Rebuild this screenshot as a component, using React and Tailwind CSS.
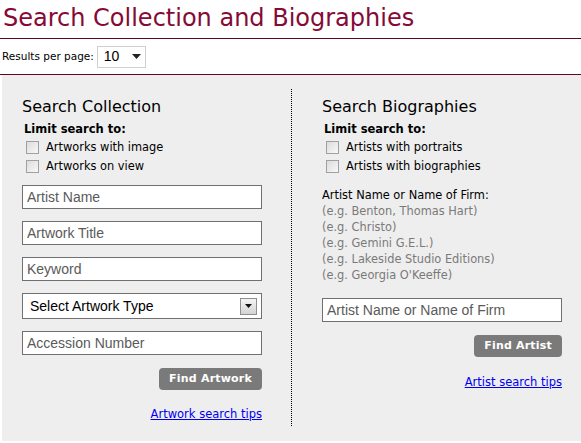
import { useState } from "react";

const FONT = { fontFamily: '"DejaVu Sans", Verdana, sans-serif' };
const ARIAL = { fontFamily: '"Liberation Sans", Arial, sans-serif' };

function Check({ label }) {
  const [on, setOn] = useState(false);
  return (
    <label className="flex items-center h-[19px] cursor-pointer" onClick={() => setOn(!on)}>
      <span className="ml-1 w-[13px] h-[13px] border border-[#a0a0a0] bg-gradient-to-br from-[#dcdcdc] to-[#f8f8f8] flex items-center justify-center text-[10px] leading-none">
        {on ? "✓" : ""}
      </span>
      <span className="ml-[7px] text-[11.4px] text-black">{label}</span>
    </label>
  );
}

function Field({ placeholder }) {
  return (
    <input
      type="text"
      placeholder={placeholder}
      style={ARIAL}
      className="block w-[240px] h-[24px] border border-[#707070] bg-white px-1 text-[14px] text-black placeholder:text-[#5a5a5a] outline-none"
    />
  );
}

function GrayButton({ children }) {
  return (
    <button className="h-[22px] px-[10px] rounded-[4px] bg-[#7a7a7a] text-white text-[11px] font-bold tracking-[0.2px]">
      {children}
    </button>
  );
}

export default function App() {
  return (
    <div className="w-[581px] h-[443px] bg-white overflow-hidden" style={FONT}>
      <h1 className="pl-[3px] pt-[2px] h-[39px] text-[24px] leading-[32px] text-[#850a35] border-b border-[#5a0822]">
        Search Collection and Biographies
      </h1>

      <div className="h-[36px] flex items-center pl-[2px] border-b border-[#5a0822]">
        <span className="text-[10.5px] text-black">Results per page:</span>
        <div className="ml-[3px] w-[49px] h-[22px] border border-[#d0d0d0] bg-white flex items-center justify-between pl-[6px] pr-[4px]" style={ARIAL}>
          <span className="text-[14px] text-black">10</span>
          <svg width="9" height="5" viewBox="0 0 9 5"><path d="M0 0h9L4.5 5z" fill="#222" /></svg>
        </div>
      </div>

      <div className="ml-[2px] h-[366px] bg-[#eeeeee] flex">
        {/* left column */}
        <div className="w-[290px] pt-[14px] pb-[15px]">
          <div className="h-full border-r border-dotted border-black pl-[20px] pt-[8px]">
            <h2 className="text-[16px] leading-[20px] text-black">Search Collection</h2>
            <div className="mt-[5px] ml-[2px] text-[11.5px] font-bold leading-[15px]">Limit search to:</div>
            <div className="mt-[1px]">
              <Check label="Artworks with image" />
              <Check label="Artworks on view" />
            </div>
            <div className="mt-[9px] flex flex-col gap-[12px]">
              <Field placeholder="Artist Name" />
              <Field placeholder="Artwork Title" />
              <Field placeholder="Keyword" />
              <div className="w-[240px] h-[26px] border border-[#707070] bg-white flex items-center justify-between pl-[7px] pr-[4px]" style={ARIAL}>
                <span className="text-[14px] text-black">Select Artwork Type</span>
                <span className="w-[17px] h-[17px] border border-[#909090] bg-gradient-to-b from-[#f4f4f4] to-[#d4d4d4] flex items-center justify-center">
                  <svg width="7" height="4" viewBox="0 0 7 4"><path d="M0 0h7L3.5 4z" fill="#111" /></svg>
                </span>
              </div>
              <Field placeholder="Accession Number" />
            </div>
            <div className="w-[240px] mt-[13px] flex justify-end">
              <GrayButton>Find Artwork</GrayButton>
            </div>
            <div className="w-[240px] mt-[16px] flex justify-end">
              <a href="#" className="text-[11.5px] text-[#0000ee] underline">Artwork search tips</a>
            </div>
          </div>
        </div>

        {/* right column */}
        <div className="pl-[30px] pt-[22px]">
          <h2 className="text-[16px] leading-[20px] text-black">Search Biographies</h2>
          <div className="mt-[5px] ml-[2px] text-[11.5px] font-bold leading-[15px]">Limit search to:</div>
          <div className="mt-[1px]">
            <Check label="Artists with portraits" />
            <Check label="Artists with biographies" />
          </div>
          <div className="mt-[11px] text-[11.4px] leading-[16px] text-black">Artist Name or Name of Firm:</div>
          <div className="text-[11.4px] leading-[16px] text-[#7a7a7a]">
            <div>(e.g. Benton, Thomas Hart)</div>
            <div>(e.g. Christo)</div>
            <div>(e.g. Gemini G.E.L.)</div>
            <div>(e.g. Lakeside Studio Editions)</div>
            <div>(e.g. Georgia O'Keeffe)</div>
          </div>
          <div className="mt-[15px]">
            <Field placeholder="Artist Name or Name of Firm" />
          </div>
          <div className="w-[240px] mt-[13px] flex justify-end">
            <GrayButton>Find Artist</GrayButton>
          </div>
          <div className="w-[240px] mt-[17px] flex justify-end">
            <a href="#" className="text-[11.5px] text-[#0000ee] underline">Artist search tips</a>
          </div>
        </div>
      </div>
    </div>
  );
}
